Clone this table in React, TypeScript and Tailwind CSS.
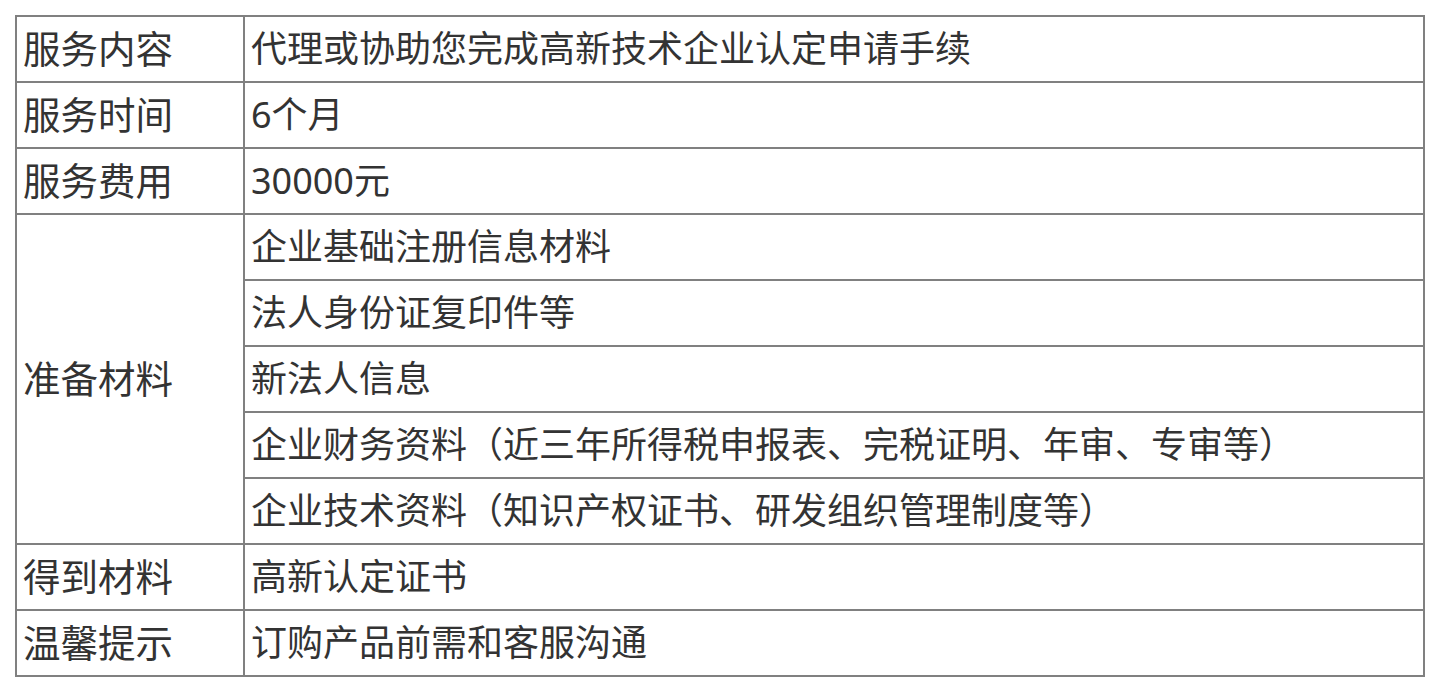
const rows = [
  { label: '服务内容', items: ['代理或协助您完成高新技术企业认定申请手续'] },
  { label: '服务时间', items: ['6个月'] },
  { label: '服务费用', items: ['30000元'] },
  {
    label: '准备材料',
    items: [
      '企业基础注册信息材料',
      '法人身份证复印件等',
      '新法人信息',
      '企业财务资料（近三年所得税申报表、完税证明、年审、专审等）',
      '企业技术资料（知识产权证书、研发组织管理制度等）',
    ],
  },
  { label: '得到材料', items: ['高新认定证书'] },
  { label: '温馨提示', items: ['订购产品前需和客服沟通'] },
];

export default function App() {
  return (
    <div className="min-h-[692px] w-[1440px] bg-white pl-[15px] pt-[15px] font-['Noto_Sans','Noto_Sans_CJK_SC',sans-serif] text-[36px] text-[#333]">
      <div className="w-[1410px] border-l-2 border-t-2 border-[#808080]">
        {rows.map((row) => (
          <div key={row.label} className="flex">
            <div className="flex w-[228px] shrink-0 items-center border-b-2 border-r-2 border-[#808080] pl-[6px] text-[37.5px] leading-none">
              {row.label}
            </div>
            <div className="flex flex-1 flex-col">
              {row.items.map((item) => (
                <div
                  key={item}
                  className="flex h-[66px] items-center border-b-2 border-r-2 border-[#808080] pl-[6px] leading-none"
                >
                  {item}
                </div>
              ))}
            </div>
          </div>
        ))}
      </div>
    </div>
  );
}
